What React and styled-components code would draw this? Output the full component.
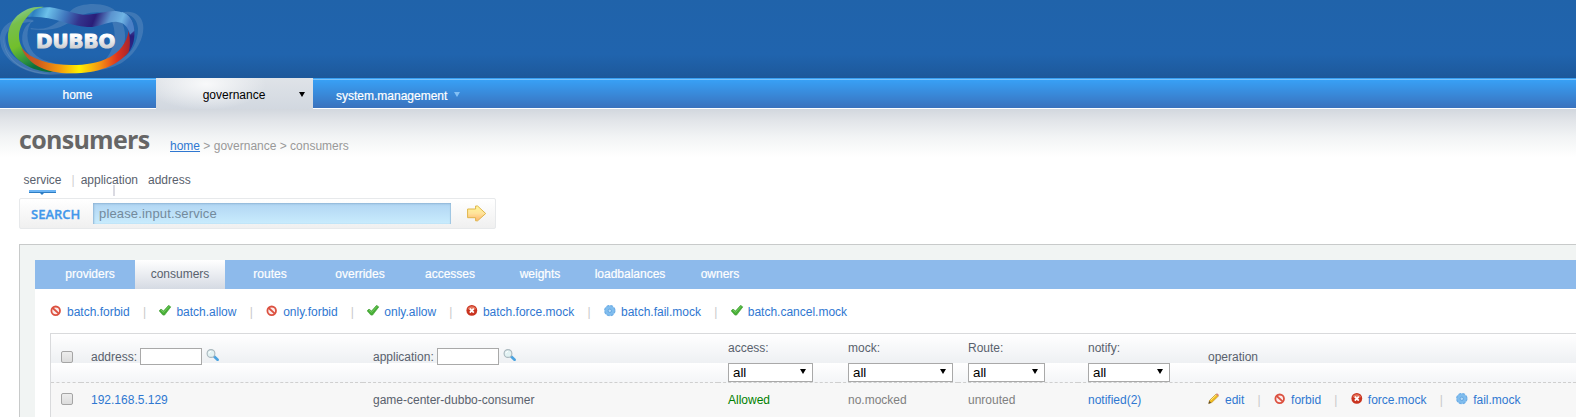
import React from 'react'
import styled, { createGlobalStyle, css } from 'styled-components'

const navLinks = [
  { id: 1, text: 'home', width: 156 },
  { id: 2, text: 'governance', width: 157, active: true, arrow: true },
  { id: 3, text: 'system.management', width: 165, arrow: true },
]

const tabs = [
  'providers',
  'consumers',
  'routes',
  'overrides',
  'accesses',
  'weights',
  'loadbalances',
  'owners',
]

const batchActions = [
  { text: 'batch.forbid', icon: 'forbid' },
  { text: 'batch.allow', icon: 'allow' },
  { text: 'only.forbid', icon: 'forbid' },
  { text: 'only.allow', icon: 'allow' },
  { text: 'batch.force.mock', icon: 'force' },
  { text: 'batch.fail.mock', icon: 'fail' },
  { text: 'batch.cancel.mock', icon: 'allow' },
]

const rowActions = [
  { text: 'edit', icon: 'edit' },
  { text: 'forbid', icon: 'forbid' },
  { text: 'force.mock', icon: 'force' },
  { text: 'fail.mock', icon: 'fail' },
]

const selects = [
  { text: 'access:', width: 85 },
  { text: 'mock:', width: 105 },
  { text: 'Route:', width: 77 },
  { text: 'notify:', width: 82 },
]

const Logo = () => (
  <svg width='144' height='78' viewBox='0 0 432 234' aria-label='Dubbo'>
    <defs>
      <linearGradient id='green' x1='0' y1='0' x2='0.35' y2='1'>
        <stop offset='0' stopColor='#8fd3c4' />
        <stop offset='0.28' stopColor='#77bf4c' />
        <stop offset='0.6' stopColor='#72bf2c' />
        <stop offset='0.85' stopColor='#2f9440' />
        <stop offset='1' stopColor='#0c6f3d' />
      </linearGradient>
      <linearGradient id='sky' x1='0' y1='0' x2='1' y2='0.1'>
        <stop offset='0' stopColor='#4fa3d8' />
        <stop offset='0.07' stopColor='#2d7fc0' />
        <stop offset='0.2' stopColor='#6cc0ea' />
        <stop offset='0.38' stopColor='#3f76bd' />
        <stop offset='0.52' stopColor='#34348d' />
        <stop offset='0.66' stopColor='#2a1d78' />
        <stop offset='0.8' stopColor='#5b94cf' />
        <stop offset='0.92' stopColor='#6fb4e4' />
        <stop offset='1' stopColor='#4a80c6' />
      </linearGradient>
      <linearGradient id='violet' x1='0' y1='0' x2='0' y2='1'>
        <stop offset='0' stopColor='#6fb0e2' />
        <stop offset='0.3' stopColor='#4a6cba' />
        <stop offset='0.6' stopColor='#291d7b' />
        <stop offset='1' stopColor='#2a2c8a' />
      </linearGradient>
      <linearGradient id='fire' x1='0' y1='0' x2='1' y2='0'>
        <stop offset='0' stopColor='#b5542c' />
        <stop offset='0.15' stopColor='#cf5a1e' />
        <stop offset='0.35' stopColor='#f49a0c' />
        <stop offset='0.53' stopColor='#fff000' />
        <stop offset='0.72' stopColor='#f39412' />
        <stop offset='0.88' stopColor='#e0341c' />
        <stop offset='1' stopColor='#a3242f' />
      </linearGradient>
      <linearGradient id='steel' x1='0' y1='0' x2='0' y2='1'>
        <stop offset='0.25' stopColor='#ffffff' />
        <stop offset='0.8' stopColor='#c9cbce' />
      </linearGradient>
    </defs>
    <g fill='#a9c0dc' fillOpacity='0.22' fillRule='evenodd'>
      <path d='M100 60 C40 48 0 75 0 118 C2 185 80 224 150 224 C220 223 330 216 372 184 C420 150 436 98 428 68 C420 38 392 30 362 38 C400 42 412 62 414 86 C414 125 395 158 370 172 C320 208 220 214 150 212 C80 206 18 170 16 118 C16 85 50 66 100 66Z' />
      <path d='M92 84 C150 96 180 62 215 30 C245 5 330 5 352 40 C392 100 382 168 310 186 C355 140 350 80 325 45 C300 28 245 40 215 62 C175 92 130 92 92 88Z' />
      <path d='M98 62 C76 84 78 130 100 158 C120 182 160 192 220 196 L210 206 C130 206 84 176 68 130 C62 98 76 72 98 62Z' />
      <path d='M12 100 C4 160 50 210 130 218 L150 222 C60 222 0 170 12 100Z' />
    </g>
    <path
      fill='url(#green)'
      d='M132 21 C72 16 24 58 24 112 C24 172 84 212 150 217 L160 214 C104 196 57 150 57 110 C57 72 84 36 132 21Z'
    />
    <path
      fill='url(#fire)'
      d='M64 143 C92 178 148 195 215 195 C300 195 374 168 386 92 C393 120 392 140 386 157 C350 198 296 220 215 220 C128 220 82 188 64 143Z'
    />
    <path
      fill='url(#violet)'
      d='M350 62 C366 62 382 76 386 94 C391 118 391 140 386 157 C401 138 405 112 403 88 C400 62 386 42 366 36Z'
    />
    <path
      fill='url(#sky)'
      d='M84 51 C94 31 112 20 150 22 C190 27 212 40 250 44 C290 45 318 32 348 33 C382 36 401 62 403 92 L390 104 C384 78 370 67 348 65 C318 66 298 82 262 81 C205 79 158 46 84 51Z'
    />
    <text
      x='108'
      y='145'
      fill='url(#steel)'
      stroke='url(#steel)'
      strokeWidth='3'
      strokeLinejoin='round'
      fontFamily='"DejaVu Sans", sans-serif'
      fontWeight='bold'
      fontSize='58'
      textLength='238'
      lengthAdjust='spacingAndGlyphs'
    >
      DUBBO
    </text>
  </svg>
)

const iconShapes = {
  forbid: (
    <g fill='none' stroke='#dc5140' strokeWidth='1.8'>
      <circle cx='5.7' cy='5.8' r='4.3' fill='#fbeceb' />
      <path d='M2.7 3 L8.8 8.7' />
    </g>
  ),
  allow: (
    <>
      <path
        d='M0.1 5.8 L2 4.1 L4.5 6 L9.6 0.3 L11.8 1.9 L5.6 10.1 L3.9 10.1Z'
        fill='#47ad36'
        stroke='#3a9a2d'
        strokeWidth='0.6'
      />
      <path d='M1.8 5 L4.6 7.3 L10 1.4' fill='none' stroke='#7fd66a' strokeWidth='0.8' />
    </>
  ),
  force: (
    <>
      <circle cx='5.8' cy='5.4' r='5.4' fill='#c9331f' />
      <path d='M1.4 4.2 A4.7 4.7 0 0 1 10.2 4.2Z' fill='#e5775f' />
      <path d='M3.8 3.6 L7.8 7.6 M7.8 3.6 L3.8 7.6' stroke='#fff' strokeWidth='1.8' />
    </>
  ),
  fail: (
    <>
      <circle cx='5.8' cy='5.6' r='5.2' fill='#80bdee' />
      <circle
        cx='5.8'
        cy='5.6'
        r='5.1'
        fill='none'
        stroke='#6faee6'
        strokeWidth='1.3'
        strokeDasharray='2.8 1.2'
      />
      <circle cx='5.8' cy='5.8' r='1.7' fill='#b5dafa' stroke='#5b9edb' strokeWidth='0.8' />
    </>
  ),
  edit: (
    <>
      <path d='M0.8 10.5 L1.6 7.3 L8.1 1 L10.4 3.1 L3.8 9.5Z' fill='#efbb1f' stroke='#b98a1c' strokeWidth='0.6' />
      <path d='M2.6 7.3 L8.5 1.7' stroke='#ffe884' strokeWidth='1' />
      <path d='M7.9 1.2 L9 0.2 L11 2.1 L10.1 3.2Z' fill='#d9837a' />
      <path d='M0.4 10.8 L1.3 8 L3.1 9.8Z' fill='#564733' />
    </>
  ),
  search: (
    <>
      <path d='M8.2 7.5 L11.6 10.8' stroke='#4ba3e0' strokeWidth='2.6' strokeLinecap='round' />
      <circle cx='5' cy='4.5' r='3.9' fill='#e2f2f3' stroke='#a9b7bd' strokeWidth='1.1' />
      <path d='M2.9 4.3 A2.2 2.2 0 0 1 5 2.4' fill='none' stroke='#fff' />
    </>
  ),
}

const Icon = ({ name }) => (
  <IconBox width='13' height='12' viewBox='0 0 13 12'>
    {iconShapes[name]}
  </IconBox>
)

const ActionList = ({ actions }) => (
  <Actions>
    {actions.map(({ text, icon }) => (
      <li key={text}>
        <Icon name={icon} />
        <a href='#'>{text}</a>
      </li>
    ))}
  </Actions>
)

const App = () => {
  return (
    <>
      <GlobalStyle />
      <Header>
        <Logo />
      </Header>
      <Nav>
        {navLinks.map(({ id, text, width, active, arrow }) => (
          <NavItem key={id} $width={width} $active={active} $low={id === 3}>
            <span>{text}</span>
            {arrow && <Caret $color={active ? '#000' : '#83c0f5'} />}
          </NavItem>
        ))}
      </Nav>
      <Main>
        <TitleRow>
          <h1>consumers</h1>
          <p>
            <a href='#'>home</a> &gt; governance &gt; consumers
          </p>
        </TitleRow>
        <SearchTabs>
          <SearchTab $active>service</SearchTab>
          <Bar>|</Bar>
          <SearchTab $dropped>application</SearchTab>
          <SearchTab>address</SearchTab>
        </SearchTabs>
        <SearchForm>
          <label htmlFor='keyword'>SEARCH</label>
          <input id='keyword' placeholder='please.input.service' />
          <svg width='20' height='17' viewBox='0 0 20 17'>
            <defs>
              <linearGradient id='gold' x1='0' y1='0' x2='0' y2='1'>
                <stop offset='0' stopColor='#fff79b' />
                <stop offset='0.5' stopColor='#ffe39b' />
                <stop offset='1' stopColor='#ffb46c' />
              </linearGradient>
            </defs>
            <path
              d='M0.6 4 H8.6 V1 H10.6 L18.7 8.5 L10.6 15.8 H8.6 V12.7 H0.6Z'
              fill='url(#gold)'
              stroke='#dfb64b'
            />
          </svg>
        </SearchForm>
        <Panel>
          <Tabs>
            {tabs.map((tab) => (
              <Tab key={tab} $active={tab === 'consumers'}>
                {tab}
              </Tab>
            ))}
          </Tabs>
          <PanelBody>
            <ActionList actions={batchActions} />
            <Table>
              <HeadRow>
                <Cell>
                  <Checkbox />
                </Cell>
                {['address:', 'application:'].map((text) => (
                  <Cell key={text}>
                    {text}
                    <FilterInput />
                    <Icon name='search' />
                  </Cell>
                ))}
                {selects.map(({ text, width }) => (
                  <FilterCell key={text}>
                    {text}
                    <SelectBox $width={width}>
                      <select>
                        <option>all</option>
                      </select>
                      <Caret $color='#000' />
                    </SelectBox>
                  </FilterCell>
                ))}
                <Cell>operation</Cell>
              </HeadRow>
              <Row>
                <Cell>
                  <Checkbox />
                </Cell>
                <Cell>
                  <a href='#'>192.168.5.129</a>
                </Cell>
                <Cell>game-center-dubbo-consumer</Cell>
                <Cell $color='#008000'>Allowed</Cell>
                <Cell $color='#808080'>no.mocked</Cell>
                <Cell $color='#808080'>unrouted</Cell>
                <Cell>
                  <a href='#'>notified(2)</a>
                </Cell>
                <Cell>
                  <ActionList actions={rowActions} />
                </Cell>
              </Row>
            </Table>
          </PanelBody>
        </Panel>
      </Main>
    </>
  )
}

const GlobalStyle = createGlobalStyle`
  * {
    box-sizing: border-box;
    margin: 0;
    padding: 0;
  }
  body {
    background: #fff;
    color: #59616d;
    font: 12px/20px 'Liberation Sans', Arial, sans-serif;
  }
  a {
    color: #2f77d1;
    text-decoration: none;
  }
  ul {
    list-style: none;
  }
`

const Header = styled.header`
  height: 78px;
  background: linear-gradient(#2063aa, #2064ae 70%, #1d589a);
  svg {
    display: block;
  }
`

const Nav = styled.nav`
  display: flex;
  height: 31px;
  background: linear-gradient(#38a0f4 1px, #7cc3fb 1px, #7cc3fb 2px, #38a0f5 2px, #3a72bd 30px, #fff 30px);
`

const Caret = styled.i`
  width: 0;
  height: 0;
  border: 3px solid transparent;
  border-top: 5px solid ${({ $color }) => $color};
  border-bottom: 0;
`

const NavItem = styled.a`
  display: flex;
  justify-content: center;
  width: ${({ $width }) => $width}px;
  height: 31px;
  padding: ${({ $low }) => ($low ? 8 : 7)}px 1px 0 0;
  color: #fff;
  -webkit-text-stroke: 0.2px;
  position: relative;
  ${({ $active }) =>
    $active &&
    css`
      color: #000;
      -webkit-text-stroke: 0;
      background:
        radial-gradient(ellipse 60px 26px at 50px 6px, #f8f9fa, transparent),
        linear-gradient(#dfe3e8, #d2d8e0);
    `}
  ${Caret} {
    position: absolute;
    top: 14px;
    right: 8px;
  }
  ${({ $low }) =>
    $low &&
    css`
      justify-content: flex-start;
      padding-left: 23px;
      ${Caret} {
        right: 18px;
      }
    `}
`

const Main = styled.main`
  padding-left: 19px;
  background: linear-gradient(#d2d7de, #e2e5e9 12px, #f2f4f5 28px, #fff 48px);
`

const TitleRow = styled.div`
  display: flex;
  align-items: flex-start;
  height: 61px;
  padding-top: 13px;
  h1 {
    width: 151px;
    color: #666;
    font: bold 25px/34px 'Open Sans', sans-serif;
    letter-spacing: -0.7px;
  }
  p {
    padding-top: 14px;
    color: #999;
  }
  a {
    text-decoration: underline;
  }
`

const Bar = styled.span`
  margin: 0 6px 0 10px;
  color: #d0d0d0;
`

const SearchTabs = styled.div`
  display: flex;
  height: 28px;
  padding-left: 4.5px;
`

const SearchTab = styled.a`
  position: relative;
  margin-right: ${({ $active }) => ($active ? 0 : 10)}px;
  color: #59616d;
  ${({ $dropped }) =>
    $dropped &&
    css`
      &::after {
        content: '';
        position: absolute;
        left: 32px;
        top: 15px;
        width: 2px;
        height: 11px;
        background: #dadae2;
      }
    `}
  ${({ $active }) =>
    $active &&
    css`
      &::before {
        content: '';
        position: absolute;
        left: 5px;
        top: 20px;
        width: 27px;
        height: 3px;
        background: linear-gradient(#6cb4f4 2px, #2c7dc4 2px);
      }
      &::after {
        content: '';
        position: absolute;
        left: 16px;
        top: 23px;
        border: 2px solid transparent;
        border-top-color: #2c7dc4;
        border-bottom: 0;
      }
    `}
`

const SearchForm = styled.form`
  display: flex;
  align-items: center;
  width: 477px;
  height: 31px;
  padding-left: 11px;
  border: 1px solid #e7e9eb;
  border-radius: 2px;
  background: linear-gradient(#fff, #f0f0f0);
  label {
    width: 62px;
    color: #4398eb;
    font: 600 13px/20px 'Open Sans', sans-serif;
    -webkit-text-stroke: 0.3px;
  }
  input {
    width: 358px;
    height: 21px;
    padding-left: 6px;
    border: 0;
    background: linear-gradient(#b1d5f3, #c9ecfd);
    box-shadow: inset 1px 1px 2px #8fb5d6, inset -1px 0 1px #9fc6e2;
    font: 13px 'Liberation Sans', Arial, sans-serif;
    letter-spacing: 0.15px;
  }
  input::placeholder {
    color: #738a9c;
  }
  svg {
    margin-left: 16px;
  }
`

const Panel = styled.section`
  height: 173px;
  margin-top: 15px;
  padding: 15px 0 0 15px;
  border: solid #c8caca;
  border-width: 1px 0 0 1px;
  background: #f1f4f3;
`

const Tabs = styled.div`
  display: flex;
  height: 29px;
  padding-left: 10px;
  background: #8dbaeb;
`

const Tab = styled.a`
  width: 90px;
  line-height: 28px;
  text-align: center;
  color: #fff;
  -webkit-text-stroke: 0.2px;
  ${({ $active }) =>
    $active &&
    css`
      color: #59616d;
      -webkit-text-stroke: 0;
      background: linear-gradient(#fff, #d5dae3);
    `}
`

const PanelBody = styled.div`
  height: 128px;
  padding: 13px 0 0 15px;
  background: #fff;
`

const IconBox = styled.svg`
  flex: none;
`

const Actions = styled.ul`
  display: flex;
  li {
    display: flex;
    align-items: flex-start;
  }
  li + li::before {
    content: '|';
    margin: 0 13.4px 0 13.2px;
    color: #c9c9c9;
  }
  ${IconBox} {
    margin: 3px 4px 0 0;
  }
`

const Table = styled.div`
  margin-top: 11px;
  border: solid #d9dadc;
  border-width: 1px 0 0 1px;
`

const Row = styled.div`
  display: grid;
  grid-template-columns: 30px 282px 355px repeat(4, 120px) 1fr;
  height: 34px;
  padding-top: 7px;
  background: #f7f7f7;
`

const Cell = styled.div`
  display: flex;
  padding-left: 10px;
  white-space: nowrap;
  color: ${({ $color }) => $color || 'inherit'};
`

const FilterCell = styled(Cell)`
  flex-direction: column;
`

const HeadRow = styled(Row)`
  height: 49px;
  padding-top: 0;
  background: linear-gradient(#fff, #eef0f3) 0 0 / 100% 29px;
  ${Cell} {
    padding-top: 13px;
    border-bottom: 1px dashed #cfcfcf;
  }
  ${FilterCell} {
    padding-top: 4px;
  }
  ${IconBox} {
    margin: 2px 0 0 4px;
  }
`

const Checkbox = styled.input.attrs({ type: 'checkbox' })`
  appearance: none;
  width: 12px;
  height: 12px;
  margin-top: 3px;
  border: 1px solid #a5a5a5;
  border-radius: 2px;
  background: linear-gradient(#ededed, #dcdcdc);
  ${HeadRow} & {
    margin-top: 4px;
  }
`

const FilterInput = styled.input`
  width: 62px;
  height: 17px;
  margin: 1px 0 0 3px;
  border: 1px solid #a9a9a9;
`

const SelectBox = styled.div`
  position: relative;
  width: ${({ $width }) => $width}px;
  height: 19px;
  margin-top: 5px;
  select {
    display: block;
    appearance: none;
    width: 100%;
    height: 19px;
    padding-left: 4px;
    border: 1px solid #a9a9a9;
    border-radius: 0;
    background: #fff;
    color: #000;
    font: 13.33px 'Liberation Sans', Arial, sans-serif;
  }
  ${Caret} {
    position: absolute;
    top: 6px;
    right: 7px;
  }
`

export default App
